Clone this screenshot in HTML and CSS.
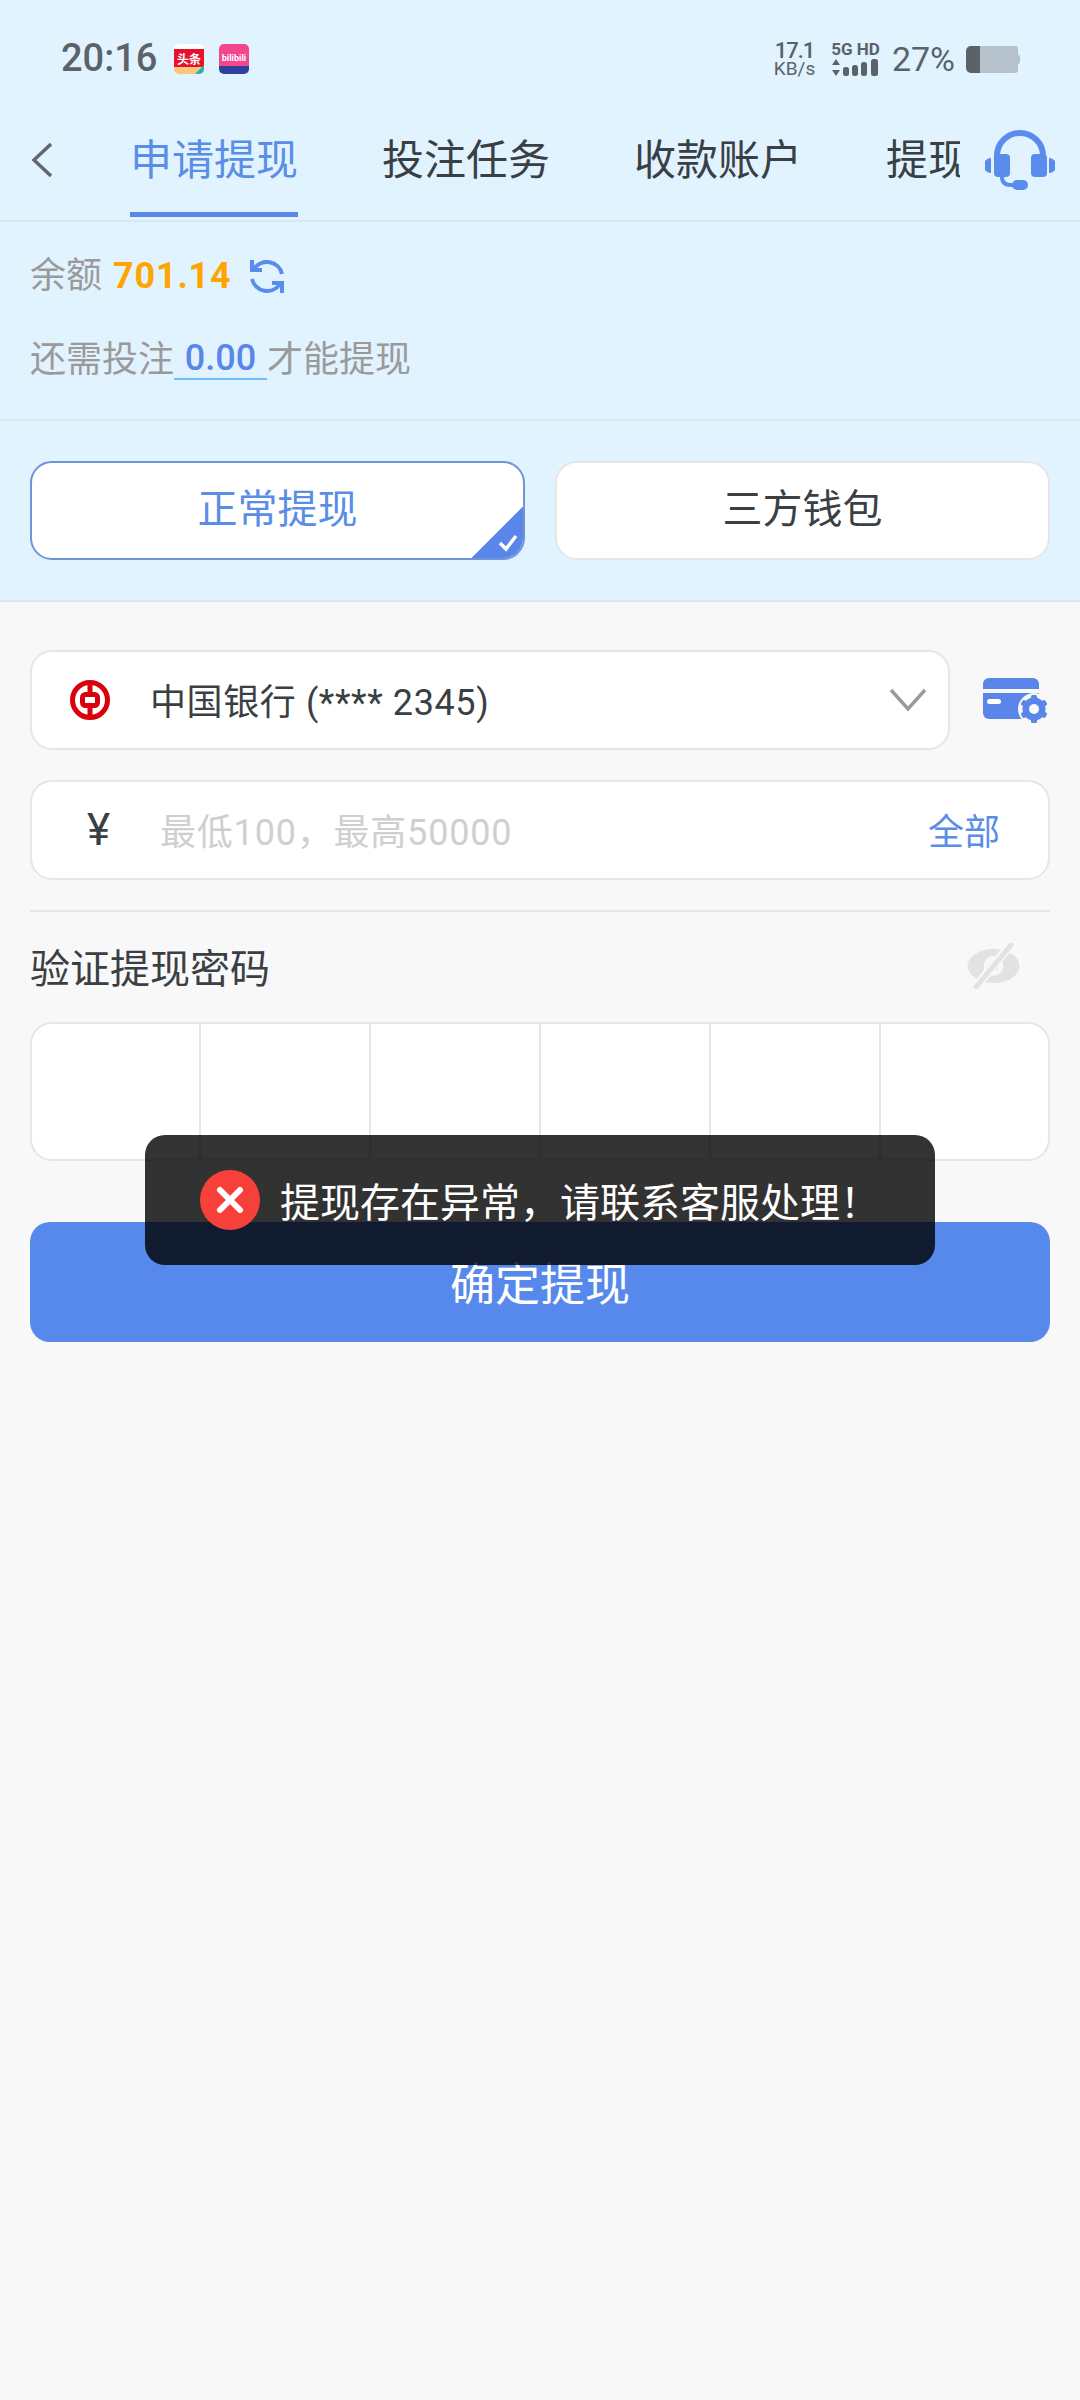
FILE: index.html
```html
<!DOCTYPE html>
<html lang="zh-CN">
<head>
	<meta charset="UTF-8" />
	<meta name="viewport" content="width=device-width, initial-scale=1.0" />
	<title>申请提现</title>
	<link rel="stylesheet" href="styles.css">
</head>
<body>
<div class="top">
	<div class="status">
		<span class="time">20:16</span>
		<svg class="app-icon" viewBox="0 0 30 30">
			<rect width="30" height="30" rx="5" fill="#fff"/>
			<rect y="5" width="30" height="18" fill="#e8112d"/>
			<path d="M0 23h30v2a5 5 0 0 1-5 5H5a5 5 0 0 1-5-5z" fill="#fbc57c"/>
			<path d="M21 30l9-9v4a5 5 0 0 1-5 5z" fill="#1fb5b0"/>
			<text x="15" y="19.5" class="app-text-a">头条</text>
		</svg>
		<svg class="app-icon" viewBox="0 0 30 30">
			<path d="M5 0h20a5 5 0 0 1 5 5v17H0V5a5 5 0 0 1 5-5z" fill="#f2468d"/>
			<path d="M0 22h30v3a5 5 0 0 1-5 5H5a5 5 0 0 1-5-5z" fill="#2c409c"/>
			<text x="15" y="17" class="app-text-b">bilibili</text>
		</svg>
		<div class="status-right">
			<div class="speed">
				<span class="speed-num">17.1</span>
				<span class="speed-unit">KB/s</span>
			</div>
			<div class="net">
				<span class="net-label">5G HD</span>
				<svg width="47" height="17" viewBox="0 0 47 17" fill="#5b6369">
					<path d="M4 0l4 6H0zM4 17l-4-6h8z"/>
					<rect x="11" y="8" width="6" height="9" rx="2.5"/>
					<rect x="20" y="6" width="6" height="11" rx="2.5"/>
					<rect x="29" y="3" width="6" height="14" rx="2.5"/>
					<rect x="39" y="0" width="7" height="17" rx="2.5"/>
				</svg>
			</div>
			<span class="percent">27%</span>
			<svg width="54" height="27" viewBox="0 0 54 27">
				<path d="M6 0h43a3 3 0 0 1 3 3v21a3 3 0 0 1-3 3H6z" fill="#b5c2cc"/>
				<path d="M52 9h0a2 2 0 0 1 2 2v5a2 2 0 0 1-2 2z" fill="#b5c2cc"/>
				<path d="M5 0h9v27H5a5 5 0 0 1-5-5V5a5 5 0 0 1 5-5z" fill="#5b6369"/>
			</svg>
		</div>
	</div>

	<div class="nav">
		<svg class="back" width="22" height="36" viewBox="0 0 22 36" fill="none" stroke="#62676b" stroke-width="3.5">
			<path d="M20 2L3 18l17 16"/>
		</svg>
		<div class="tabs">
			<span class="tab tab-on">申请提现</span>
			<span class="tab">投注任务</span>
			<span class="tab">收款账户</span>
			<span class="tab">提现记录</span>
		</div>
		<svg class="headset" width="70" height="60" viewBox="0 0 70 60" fill="#5a8cee">
			<path d="M12 30V26a23 23 0 0 1 46 0v4" fill="none" stroke="#5a8cee" stroke-width="6"/>
			<rect x="9" y="24" width="16" height="23" rx="4"/>
			<rect x="46" y="24" width="16" height="23" rx="4"/>
			<path d="M6 28v15a7.500 7.500 0 0 1 0-15zM64 28v15a7.500 7.500 0 0 0 0-15z"/>
			<path d="M17 47c0 5 3 8 9 8h6" fill="none" stroke="#5a8cee" stroke-width="4"/>
			<rect x="27" y="50" width="16" height="10" rx="5"/>
		</svg>
	</div>

	<div class="info">
		<div class="info-row">
			<span>余额</span>
			<b class="balance">701.14</b>
			<svg class="refresh" width="36" height="36" viewBox="0 0 36 36" fill="none" stroke="#5a8cee" stroke-width="4">
				<path d="M33 16A15.500 15.500 0 0 0 5 11"/>
				<path d="M3 2v10h10"/>
				<path d="M3 21a15.500 15.500 0 0 0 28 5"/>
				<path d="M33 35V25H23"/>
			</svg>
		</div>
		<div class="info-row info-row-2">
			<span>还需投注</span>
			<span class="need">0.00</span>
			<span>才能提现</span>
		</div>
	</div>

	<div class="modes">
		<div class="mode mode-on">
			正常提现
			<span class="mode-tick">
				<svg width="20" height="18" viewBox="0 0 20 18" fill="none" stroke="#fff" stroke-width="3.500">
					<path d="M2 9l6 6L18 2"/>
				</svg>
			</span>
		</div>
		<div class="mode">三方钱包</div>
	</div>
</div>

<div class="form">
	<div class="bank-row">
		<div class="field bank">
			<svg class="bank-logo" width="40" height="40" viewBox="0 0 40 40" fill="none" stroke="#d9000d" stroke-width="5">
				<circle cx="20" cy="20" r="17.500"/>
				<rect x="12.500" y="14.500" width="15" height="11" rx="3"/>
				<path d="M20 2v12M20 26v12"/>
			</svg>
			<span class="bank-name">中国银行 (**** 2345)</span>
			<svg class="chevron" width="36" height="24" viewBox="0 0 36 24" fill="none" stroke="#9a9a9a" stroke-width="3.500">
				<path d="M1 2l17 19L35 2"/>
			</svg>
		</div>
		<svg class="card-gear" width="65" height="46" viewBox="0 0 65 46" fill="#5a86ea">
			<path d="M6 0h44a6 6 0 0 1 6 6v5H0V6a6 6 0 0 1 6-6z"/>
			<path d="M0 15h56v26H6a6 6 0 0 1-6-6z"/>
			<rect x="4" y="21" width="14" height="5" rx="2.500" fill="#fff"/>
			<circle cx="51" cy="31" r="16" fill="#f8f8f8"/>
			<circle cx="51" cy="31" r="8.500" fill="none" stroke="#5a86ea" stroke-width="6"/>
			<g>
				<rect x="48" y="17" width="6" height="28" rx="1.500"/>
				<rect x="48" y="17" width="6" height="28" rx="1.500" transform="rotate(60 51 31)"/>
				<rect x="48" y="17" width="6" height="28" rx="1.500" transform="rotate(120 51 31)"/>
			</g>
			<circle cx="51" cy="31" r="5" fill="#f8f8f8"/>
		</svg>
	</div>

	<div class="field amount">
		<span class="yen">¥</span>
		<span class="hint">最低100，最高50000</span>
		<span class="all">全部</span>
	</div>

	<div class="rule"></div>

	<div class="pwd-head">
		<span>验证提现密码</span>
		<svg width="53" height="46" viewBox="0 0 53 46">
			<ellipse cx="26.500" cy="23" rx="26" ry="17" fill="#e2e2e2"/>
			<circle cx="26.500" cy="23" r="10" fill="#f8f8f8"/>
			<circle cx="26.500" cy="23" r="5" fill="#e2e2e2"/>
			<path d="M45 0L7 46" stroke="#f8f8f8" stroke-width="9"/>
			<path d="M44 2L9 44" stroke="#e2e2e2" stroke-width="5" stroke-linecap="round"/>
		</svg>
	</div>

	<div class="pwd-boxes">
		<i></i><i></i><i></i><i></i><i></i><i></i>
	</div>

	<div class="submit">确定提现</div>
</div>

<div class="toast">
	<svg class="toast-icon" width="60" height="60" viewBox="0 0 60 60">
		<circle cx="30" cy="30" r="30" fill="#f8403a"/>
		<path d="M20 20l20 20M40 20L20 40" stroke="#fff" stroke-width="6" stroke-linecap="round"/>
	</svg>
	<span>提现存在异常，请联系客服处理！</span>
</div>
</body>
</html>
```

FILE: styles.css
```css
* {
	padding: 0;
	margin: 0;
	box-sizing: border-box;
}
html, body {
	width: 1080px;
	min-height: 2400px;
}
body {
	position: relative;
	background: #f8f8f8;
	color: #3a3f44;
	font-family: Roboto, "Noto Sans CJK SC", sans-serif;
}

/* top blue block */
.top {
	background: #e1f3ff;
}

.status {
	display: flex;
	align-items: center;
	height: 100px;
	padding: 18px 60px 0 61px;
	color: #5b6369;
}
.time {
	margin: -3px 17px 0 0;
	font-size: 38px;
	font-weight: 500;
}
.app-icon {
	width: 30px;
	height: 30px;
	margin-right: 15px;
}
.app-text-a {
	font-size: 12px;
	font-weight: 700;
	fill: #fff;
	text-anchor: middle;
}
.app-text-b {
	font-size: 9px;
	font-weight: 700;
	fill: #fff;
	text-anchor: middle;
}
.status-right {
	display: flex;
	align-items: center;
	margin-left: auto;
}
.speed {
	display: flex;
	flex-direction: column;
	align-items: center;
	margin-right: 16px;
}
.speed-num {
	font-size: 22px;
	font-weight: 500;
	line-height: 20px;
	letter-spacing: -1px;
}
.speed-unit {
	font-size: 19px;
	line-height: 16px;
}
.net {
	display: flex;
	flex-direction: column;
	align-items: center;
	gap: 3px;
	margin-right: 12px;
}
.net-label {
	font-size: 17px;
	font-weight: 700;
	line-height: 14px;
	white-space: nowrap;
}
.percent {
	font-size: 34px;
	margin-right: 11px;
}

.nav {
	display: flex;
	height: 122px;
	padding-left: 31px;
	border-bottom: 2px solid #d9e8f0;
}
.back {
	margin-top: 42px;
}
.tabs {
	display: flex;
	gap: 84px;
	width: 830px;
	margin-left: 77px;
	overflow: hidden;
}
.tab {
	flex: none;
	width: 168px;
	height: 117px;
	padding-top: 40px;
	font-size: 42px;
	line-height: 42px;
	text-align: center;
	white-space: nowrap;
}
.tab-on {
	color: #5a8ee6;
	border-bottom: 5px solid #5a86ea;
}
.headset {
	margin: 30px 0 0 25px;
}

.info {
	height: 199px;
	padding: 36px 30px 0;
	border-bottom: 2px solid #dde8ee;
	color: #9a9a9a;
}
.info-row {
	display: flex;
	align-items: center;
	height: 36px;
	font-size: 36px;
	line-height: 36px;
}
.info-row-2 {
	margin-top: 48px;
}
.balance {
	margin-left: 11px;
	color: #ffa500;
	font-size: 36px;
	letter-spacing: 0.8px;
}
.refresh {
	margin-left: 17px;
}
.need {
	width: 93px;
	padding-bottom: 2px;
	border-bottom: 2px solid #6cc0f5;
	color: #5a86ea;
	font-weight: 500;
	text-align: center;
}

.modes {
	display: flex;
	gap: 30px;
	padding: 40px 30px 40px;
	border-bottom: 2px solid #dfe5ea;
}
.mode {
	position: relative;
	flex: 1;
	height: 99px;
	overflow: hidden;
	background: #fff;
	border: 2px solid #e4e6e8;
	border-radius: 22px;
	font-size: 40px;
	line-height: 94px;
	text-align: center;
}
.mode-on {
	border-color: #6f94d8;
	color: #5a8ee6;
}
/* folded corner with the check mark */
.mode-tick {
	position: absolute;
	right: 0;
	bottom: 0;
	width: 52px;
	height: 52px;
	background: linear-gradient(135deg, transparent 50%, #5a86ea 50%);
}
.mode-tick svg {
	position: absolute;
	right: 5px;
	bottom: 6px;
}

/* form */
.form {
	padding: 48px 30px 0;
}
.field {
	display: flex;
	align-items: center;
	height: 100px;
	background: #fff;
	border: 2px solid #e6e6e6;
	border-radius: 22px;
	font-size: 36px;
}
.bank-row {
	display: flex;
	align-items: center;
	justify-content: space-between;
}
.bank {
	width: 920px;
	padding: 0 22px 0 38px;
}
.bank-name {
	margin: 0 0 3px 40px;
	letter-spacing: 0.6px;
}
.chevron {
	margin-left: auto;
}
.card-gear {
	margin: 1px 2px 0 0;
}
.amount {
	margin-top: 30px;
	padding: 0 48px 0 55px;
}
.yen {
	width: 73px;
	font-size: 44px;
}
.hint {
	margin-bottom: 3px;
	color: #cfcfcf;
	letter-spacing: 0.8px;
}
.all {
	margin: 0 0 3px auto;
	color: #5a8ee6;
}
.rule {
	height: 2px;
	margin-top: 30px;
	background: #e6e6e6;
}
.pwd-head {
	display: flex;
	align-items: center;
	justify-content: space-between;
	height: 46px;
	margin-top: 31px;
	padding-right: 30px;
	font-size: 40px;
}
.pwd-boxes {
	display: grid;
	grid-template-columns: 167px repeat(4, 170px) 1fr;
	height: 139px;
	margin-top: 33px;
	background: #fff;
	border: 2px solid #e6e6e6;
	border-radius: 22px;
}
.pwd-boxes i {
	border-left: 2px solid #e6e6e6;
}
.pwd-boxes i:first-child {
	border-left: 0;
}
.submit {
	height: 120px;
	margin-top: 61px;
	background: #5788ec;
	border-radius: 20px;
	color: #fff;
	font-size: 45px;
	line-height: 128px;
	text-align: center;
}

/* message over the form */
.toast {
	position: absolute;
	left: 145px;
	top: 1135px;
	display: flex;
	align-items: center;
	gap: 20px;
	width: 790px;
	height: 130px;
	padding-left: 55px;
	background: rgba(0, 0, 0, 0.8);
	border-radius: 20px;
	color: #fff;
	font-size: 40px;
}
```
